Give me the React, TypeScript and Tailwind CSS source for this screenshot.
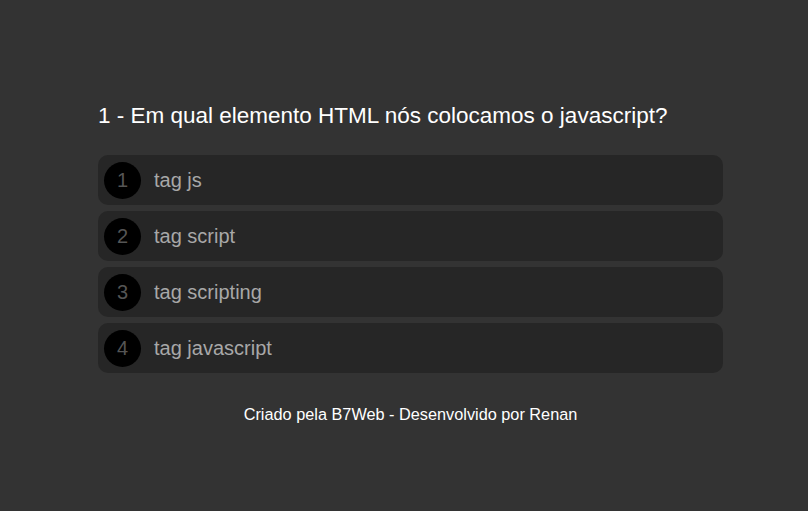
const question = "1 - Em qual elemento HTML nós colocamos o javascript?";
const options = ["tag js", "tag script", "tag scripting", "tag javascript"];

export default function App() {
  return (
    <div className="min-h-[511px] w-full bg-[#333333] font-['Liberation_Sans',Arial,sans-serif]">
      <div className="ml-[98px] w-[625px] pt-[102px]">
        <div className="text-[22.5px] leading-[28px] text-white">{question}</div>
        <div className="mt-[25px] flex flex-col gap-[6px]">
          {options.map((opt, i) => (
            <div
              key={i}
              className="flex h-[50px] items-center rounded-[10px] bg-[#262626] px-[6px]"
            >
              <div className="flex h-[37px] w-[37px] items-center justify-center rounded-full bg-black text-[20px] text-[#555555]">
                {i + 1}
              </div>
              <div className="ml-[13px] text-[20px] text-[#a8a8a8]">{opt}</div>
            </div>
          ))}
        </div>
        <div className="mt-[29px] text-center text-[16.3px] text-white">
          Criado pela B7Web - Desenvolvido por Renan
        </div>
      </div>
    </div>
  );
}
